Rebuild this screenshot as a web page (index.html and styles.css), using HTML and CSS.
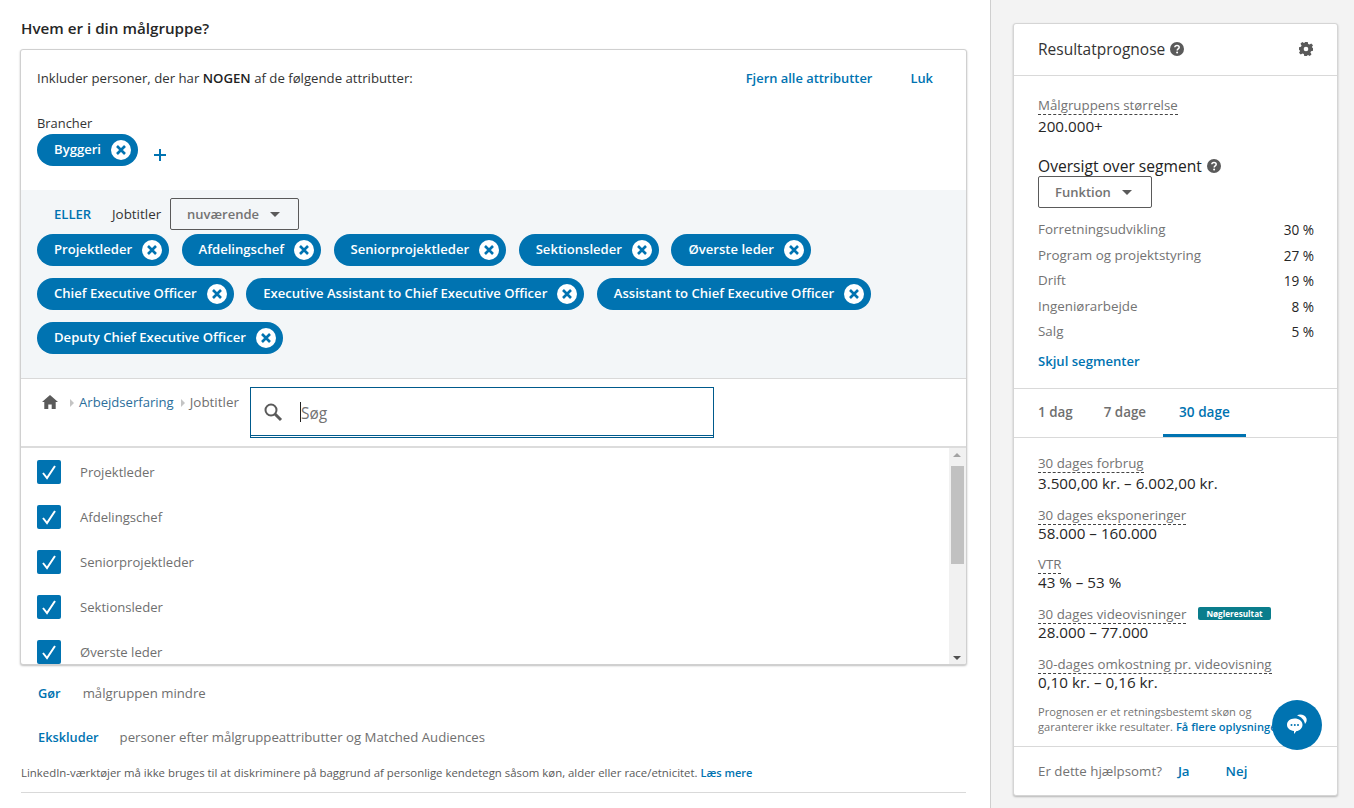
FILE: index.html
```html
<!DOCTYPE html>
<html lang="da">
<head>
<meta charset="utf-8">
<title>Målgruppe</title>
<link rel="stylesheet" href="styles.css">
</head>
<body>
<svg class="defs" width="0" height="0" aria-hidden="true">
  <symbol id="x" viewBox="0 0 20 20"><circle cx="10" cy="10" r="10" fill="#fff"/><path d="M6 6l8 8M14 6l-8 8" stroke="#0073b1" stroke-width="2.6" fill="none"/></symbol>
  <symbol id="chk" viewBox="0 0 24 24"><rect width="24" height="24" rx="2" fill="#0073b1"/><path d="M6 13l4 5 8-12" stroke="#fff" stroke-width="2" fill="none"/></symbol>
  <symbol id="q" viewBox="0 0 14 14"><circle cx="7" cy="7" r="7" fill="#5a5a5a"/><path d="M4.8 5.3C4.900 4 5.900 3.400 7 3.400c1.300 0 2.200.8 2.200 1.900 0 1.600-2 1.600-2 3.100" stroke="#fff" stroke-width="1.500" fill="none"/><circle cx="7.100" cy="10.400" r="1" fill="#fff"/></symbol>
</svg>
<div class="page">
  <main class="main">
    <h1 class="title">Hvem er i din målgruppe?</h1>
    <section class="box">
      <div class="top">
        <div class="top-row">
          <span class="incl">Inkluder personer, der har <b>NOGEN</b> af de følgende attributter:</span>
          <span class="top-links"><a class="link">Fjern alle attributter</a><a class="link">Luk</a></span>
        </div>
        <div class="lbl">Brancher</div>
        <div class="branch-row">
          <span class="chip">Byggeri<svg class="cx"><use href="#x"/></svg></span>
          <svg class="plus" width="14" height="14" viewBox="0 0 14 14"><path d="M7 1v12M1 7h12" stroke="#0073b1" stroke-width="2"/></svg>
        </div>
      </div>
      <div class="grp">
        <div class="grp-head">
          <a class="link eller">ELLER</a>
          <span class="jt">Jobtitler</span>
          <span class="sel sel-a">nuværende<i class="caret"></i></span>
        </div>
        <div class="chips">
          <span class="chip">Projektleder<svg class="cx"><use href="#x"/></svg></span>
          <span class="chip">Afdelingschef<svg class="cx"><use href="#x"/></svg></span>
          <span class="chip">Seniorprojektleder<svg class="cx"><use href="#x"/></svg></span>
          <span class="chip">Sektionsleder<svg class="cx"><use href="#x"/></svg></span>
          <span class="chip">Øverste leder<svg class="cx"><use href="#x"/></svg></span>
          <span class="chip">Chief Executive Officer<svg class="cx"><use href="#x"/></svg></span>
          <span class="chip">Executive Assistant to Chief Executive Officer<svg class="cx"><use href="#x"/></svg></span>
          <span class="chip">Assistant to Chief Executive Officer<svg class="cx"><use href="#x"/></svg></span>
          <span class="chip">Deputy Chief Executive Officer<svg class="cx"><use href="#x"/></svg></span>
        </div>
      </div>
      <div class="crumbs">
        <svg class="home" width="16" height="14" viewBox="0 0 16 14"><path d="M8 0L0 7h2.300v7h4V9.500h3.400V14h4V7H16z" fill="#5a5a5a"/></svg>
        <i class="tri"></i>
        <a class="crumb-link">Arbejdserfaring</a>
        <i class="tri"></i>
        <span class="crumb">Jobtitler</span>
        <div class="search">
          <svg width="20" height="20" viewBox="0 0 20 20"><circle cx="8" cy="8" r="5.500" fill="none" stroke="#5a5a5a" stroke-width="2"/><path d="M12 12l6 6" stroke="#5a5a5a" stroke-width="3"/></svg>
          <span class="caretbar"></span><span class="ph">Søg</span>
        </div>
      </div>
      <div class="listwrap">
        <ul class="list">
          <li><svg class="cb"><use href="#chk"/></svg>Projektleder</li>
          <li><svg class="cb"><use href="#chk"/></svg>Afdelingschef</li>
          <li><svg class="cb"><use href="#chk"/></svg>Seniorprojektleder</li>
          <li><svg class="cb"><use href="#chk"/></svg>Sektionsleder</li>
          <li><svg class="cb"><use href="#chk"/></svg>Øverste leder</li>
        </ul>
        <div class="scroll"><i class="up"></i><div class="thumb"></div><i class="down"></i></div>
      </div>
    </section>
    <div class="act act-1"><a class="link">Gør</a><span>målgruppen mindre</span></div>
    <div class="act act-2"><a class="link">Ekskluder</a><span>personer efter målgruppeattributter og Matched Audiences</span></div>
    <p class="legal">LinkedIn-værktøjer må ikke bruges til at diskriminere på baggrund af personlige kendetegn såsom køn, alder eller race/etnicitet. <a class="link">Læs mere</a></p>
    <hr class="rule">
  </main>
  <aside class="side">
    <div class="card">
      <header class="card-head">
        <span class="card-title">Resultatprognose<svg class="q"><use href="#q"/></svg></span>
        <svg class="gear" width="14" height="14" viewBox="0 0 24 24"><path fill="#5a5a5a" fill-rule="evenodd" d="M9 0h6l.7 3.400 2.300 1 3-1.900 3 3-1.900 3 1 2.300L24 9v6l-3.400.7-1 2.300 1.900 3-3 3-3-1.900-2.300 1L15 24H9l-.7-3.400-2.300-1-3 1.900-3-3 1.900-3-1-2.300L0 15V9l3.400-.7 1-2.300-1.900-3 3-3 3 1.900 2.300-1zM12 8a4 4 0 100 8 4 4 0 000-8z"/></svg>
      </header>
      <div class="seg">
        <div class="dt"><span class="dash">Målgruppens størrelse</span></div>
        <div class="dd">200.000+</div>
        <div class="ov">Oversigt over segment<svg class="q"><use href="#q"/></svg></div>
        <span class="sel sel-b">Funktion<i class="caret"></i></span>
        <div class="rows">
          <div class="row"><span>Forretningsudvikling</span><b>30 %</b></div>
          <div class="row"><span>Program og projektstyring</span><b>27 %</b></div>
          <div class="row"><span>Drift</span><b>19 %</b></div>
          <div class="row"><span>Ingeniørarbejde</span><b>8 %</b></div>
          <div class="row"><span>Salg</span><b>5 %</b></div>
        </div>
        <a class="link hide">Skjul segmenter</a>
      </div>
      <nav class="tabs">
        <span class="tab">1 dag</span><span class="tab">7 dage</span><span class="tab on">30 dage</span>
      </nav>
      <div class="stats">
        <div class="stat"><div class="dt"><span class="dash">30 dages forbrug</span></div><div class="dd">3.500,00 kr. – 6.002,00 kr.</div></div>
        <div class="stat"><div class="dt"><span class="dash">30 dages eksponeringer</span></div><div class="dd">58.000 – 160.000</div></div>
        <div class="stat"><div class="dt"><span class="dash">VTR</span></div><div class="dd">43 % – 53 %</div></div>
        <div class="stat"><div class="dt"><span class="dash">30 dages videovisninger</span><span class="badge">Nøgleresultat</span></div><div class="dd">28.000 – 77.000</div></div>
        <div class="stat"><div class="dt"><span class="dash">30-dages omkostning pr. videovisning</span></div><div class="dd">0,10 kr. – 0,16 kr.</div></div>
        <p class="note">Prognosen er et retningsbestemt skøn og<br>garanterer ikke resultater. <a class="link">Få flere oplysninger</a></p>
      </div>
      <footer class="foot">
        <span>Er dette hjælpsomt?</span><a class="link">Ja</a><a class="link">Nej</a>
      </footer>
    </div>
    <button class="fab" aria-label="Chat">
      <svg width="26" height="26" viewBox="0 0 26 26"><path d="M13 3.500c3-2 8.500-.5 9.500 3 .6 2.200-.2 4-1.500 5.500-.4-4-4-7.500-8-8.500z" fill="#fff"/><path d="M10.500 6.500c4.600 0 8 2.700 8 6.300s-3.400 6.200-6 6.300L10 22v-3C6 18.500 3 16.300 3 12.800s3.200-6.300 7.500-6.300z" fill="#fff"/><circle cx="7.500" cy="13" r="1" fill="#0073b1"/><circle cx="10.800" cy="13" r="1" fill="#0073b1"/><circle cx="14" cy="13" r="1" fill="#0073b1"/></svg>
    </button>
  </aside>
</div>
</body>
</html>
```
FILE: styles.css
```css
* { box-sizing: border-box; }
html, body { margin: 0; height: 100%; }
body { font-family: "Open Sans", "Noto Sans", sans-serif; font-size: 13px; color: #5a5a5a; background: #fff; overflow: hidden; }
.defs { position: absolute; }
.page { display: flex; height: 808px; }
.main { width: 991px; padding: 0 23px 0 20px; border-right: 1px solid #cfcfcf; flex: none; }
.title { margin: 0; padding: 18px 0 0 1px; height: 49px; font-size: 15.200px; line-height: 20px; font-weight: 600; color: #262626; }
.link { color: #0073b1; font-weight: 600; }
.box { width: 947px; height: 616px; border: 1px solid #d0d0d0; border-radius: 3px; box-shadow: 0 1px 2px rgba(0,0,0,.25); background: #fff; overflow: hidden; }
.top { height: 140px; padding: 18px 16px 0; }
.top-row { display: flex; justify-content: space-between; line-height: 20px; color: #333; }
.incl { font-size: 13.200px; }
.incl b { font-weight: 600; color: #222; }
.top-links { display: flex; gap: 38px; padding-right: 17px; font-size: 12.900px; }
.lbl { margin-top: 25px; line-height: 20px; font-size: 12.900px; color: #333; }
.branch-row { display: flex; align-items: center; gap: 15px; margin-top: 1px; }
.plus { margin-top: 10px; }
.chip { display: inline-flex; align-items: center; height: 32px; padding: 0 7px 2px 17px; border-radius: 16px; background: #0073b1; color: #fff; font-weight: 600; font-size: 13.100px; line-height: 30px; white-space: nowrap; }
.cx { width: 20px; height: 20px; margin: 2px 0 0 10px; }
.grp { height: 189px; background: #f3f6f8; padding: 8px 16px 0; border-bottom: 1px solid #d9d9d9; }
.grp-head { display: flex; align-items: center; height: 32px; padding-left: 17px; font-size: 13.100px; }
.eller { width: 58px; }
.jt { width: 58px; color: #333; font-size: 13.400px; }
.sel { display: inline-flex; align-items: center; height: 32px; border: 1px solid #5a5a5a; border-radius: 2px; color: #737373; font-weight: 600; font-size: 13px; }
.sel-a { width: 129px; padding-left: 16px; }
.sel-b { width: 114px; padding-left: 16px; }
.caret { width: 0; height: 0; margin-left: 11px; border: 5px solid transparent; border-top: 5px solid #5a5a5a; border-bottom: 0; }
.chips { display: flex; flex-wrap: wrap; gap: 12px 12.500px; margin-top: 4px; }
.crumbs { display: flex; align-items: flex-start; height: 69px; padding: 14px 0 0 21px; border-bottom: 2px solid #dcdcdc; font-size: 13.100px; line-height: 18px; }
.home { margin: 2px 5px 0 0; }
.tri { width: 0; height: 0; margin: 6px 5px 0 7px; border: 4px solid transparent; border-left: 4px solid #c4c4c4; border-right: 0; }
.crumb-link { color: #2b6e9b; }
.crumb { color: #6f6f6f; font-size: 13.400px; }
.search { display: flex; align-items: center; width: 464px; height: 51px; margin: -6px 0 0 11px; padding-left: 12px; border: 1px solid #005a8c; border-bottom: 3px double #005a8c; background: #fff; font-size: 15.500px; }
.caretbar { width: 1px; height: 20px; margin-left: 17px; background: #222; }
.ph { color: #737373; padding-top: 2px; }
.listwrap { display: flex; height: 217px; overflow: hidden; }
.list { flex: 1; margin: 0; padding: 12px 0 0 16px; list-style: none; }
.list li { display: flex; align-items: center; height: 24px; margin-bottom: 21px; font-size: 13.100px; color: #6f6f6f; }
.cb { width: 24px; height: 24px; margin-right: 19px; }
.scroll { position: relative; width: 17px; background: #f1f1f1; }
.thumb { position: absolute; top: 18px; left: 2px; width: 13px; height: 98px; background: #c1c1c1; }
.up, .down { position: absolute; left: 4px; width: 0; height: 0; border: 4px solid transparent; }
.up { top: 5px; border-bottom: 4px solid #a3a3a3; border-top: 0; }
.down { bottom: 5px; border-top: 4px solid #505050; border-bottom: 0; }
.act { display: flex; line-height: 20px; padding-left: 18px; font-size: 13.200px; color: #6f6f6f; }
.act .link { font-size: 12.800px; }
.act-1 { gap: 22px; margin-top: 18px; }
.act-2 { gap: 21px; margin-top: 24px; }
.legal { margin: 18px 0 0 1px; font-size: 11.400px; line-height: 16px; color: #5a5a5a; }
.legal .link { font-size: 11px; }
.rule { margin: 11px 0 0 1px; width: 945px; border: 0; border-top: 1px solid #d9d9d9; }
.side { flex: 1; background: #f3f3f3; padding: 23px 16px 0 22px; position: relative; }
.card { height: 773px; background: #fff; border-radius: 3px; border: 1px solid #d5d5d5; box-shadow: 0 1px 2px rgba(0,0,0,.25); overflow: hidden; }
.card-head { display: flex; justify-content: space-between; align-items: center; height: 52px; padding: 0 24px 2px; border-bottom: 1px solid #d9d9d9; }
.card-title { display: flex; align-items: center; font-size: 15.500px; color: #333; }
.q { width: 14px; height: 14px; margin-left: 5px; }
.seg { height: 313px; padding: 21px 24px 0; border-bottom: 1px solid #d9d9d9; }
.dt { line-height: 17px; font-size: 13.300px; color: #737373; display: flex; align-items: center; }
.dash { border-bottom: 1px dashed #444; }
.dd { font-size: 15.200px; line-height: 20px; color: #262626; }
.seg .dd { margin-top: 1px; }
.ov { display: flex; align-items: center; margin-top: 20px; font-size: 15.600px; line-height: 20px; color: #222; }
.rows { margin: 9px -1px 0 0; }
.row { display: flex; justify-content: space-between; height: 25.500px; line-height: 25px; font-size: 13.400px; color: #737373; }
.row b { font-weight: 400; color: #262626; font-size: 13.600px; }
.hide { display: block; margin-top: 6px; line-height: 20px; font-size: 13.100px; }
.tabs { display: flex; height: 49px; padding-left: 8px; border-bottom: 1px solid #d9d9d9; }
.tab { padding: 0 16px; line-height: 46px; font-size: 13.400px; font-weight: 600; color: #6f6f6f; }
.tab:first-child { padding-right: 15px; }
.tab:nth-child(2) { padding-right: 17px; }
.on { color: #0073b1; border-bottom: 3px solid #0073b1; font-size: 13.600px; }
.stats { height: 308px; padding: 17px 24px 0; }
.stat { margin-bottom: 14px; }
.stats .dd { margin-top: -2px; }
.stat:first-child .dd { padding-top: 2px; }
.stat:nth-child(2) { margin-bottom: 13px; }
.badge { margin: 0 0 4px 12px; padding: 0 8px; height: 13px; line-height: 13px; border-radius: 2px; background: #0a7d8c; color: #fff; font-size: 8.200px; font-weight: 700; }
.note { margin: -2px 0 0; font-size: 11.100px; line-height: 15px; color: #737373; white-space: nowrap; }
.foot { display: flex; align-items: center; height: 49px; padding: 0 24px; border-top: 1px solid #d9d9d9; font-size: 13.300px; color: #737373; }
.foot .link:first-of-type { margin-left: 16px; }
.foot .link:last-of-type { margin-left: 36px; }
.fab { position: absolute; left: 281px; top: 700px; width: 50px; height: 50px; border: 0; border-radius: 50%; padding: 0; display: flex; align-items: center; justify-content: center; background: #0073b1; }
```
